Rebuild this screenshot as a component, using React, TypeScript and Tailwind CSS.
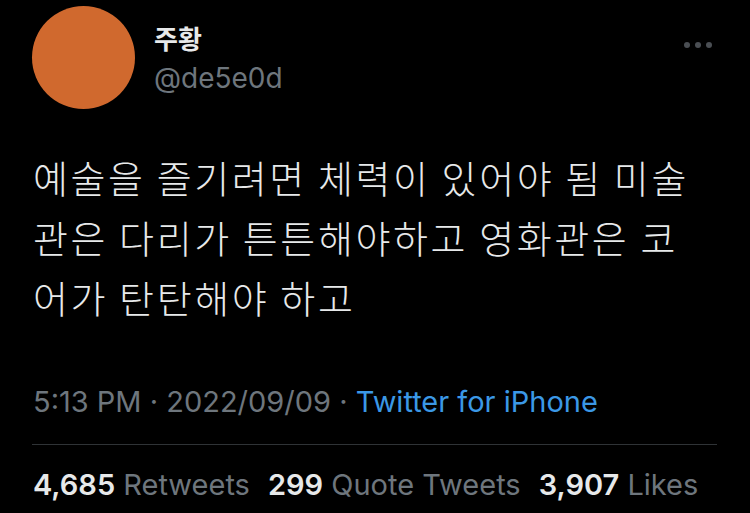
import React from "react"

const lines = [
  "예술을 즐기려면 체력이 있어야 됨 미술",
  "관은 다리가 튼튼해야하고 영화관은 코",
  "어가 탄탄해야 하고",
]

const stats = [
  { count: "4,685", label: "Retweets" },
  { count: "299", label: "Quote Tweets" },
  { count: "3,907", label: "Likes" },
]

const latin = "font-['Inter','Noto_Sans_CJK_KR',sans-serif]"

const App = () => {
  return (
    <div className={`w-[750px] h-[513px] bg-black overflow-hidden ${latin}`}>
      <div className="flex pl-[32px] pt-[6px] pr-[38px]">
        <div className="w-[103px] h-[103px] rounded-full bg-[#d0692e] shrink-0" />
        <div className="ml-[19px] flex flex-col pt-[17px]">
          <div className="text-[26px] leading-[34px] font-bold text-[#e7e9ea]">
            주황
          </div>
          <div className="text-[28px] leading-[34px] text-[#6e767d] mt-[4px]">
            @de5e0d
          </div>
        </div>
        <div className="ml-auto flex gap-[5px] pt-[36px]">
          <span className="w-[6px] h-[6px] rounded-full bg-[#4a4e53]" />
          <span className="w-[6px] h-[6px] rounded-full bg-[#4a4e53]" />
          <span className="w-[6px] h-[6px] rounded-full bg-[#4a4e53]" />
        </div>
      </div>

      <div className="px-[33px] mt-[38px] font-['Noto_Sans_CJK_KR',sans-serif] font-light text-[38px] tracking-[2.6px] leading-[60px] text-[#e7e9ea]">
        {lines.map((line, i) => (
          <div key={i} className="whitespace-nowrap">
            {line}
          </div>
        ))}
      </div>

      <div className="px-[33px] mt-[58px] text-[29px] leading-[34px] text-[#6e767d] whitespace-nowrap">
        5:13 PM · 2022/09/09 · <span className="text-[#3b98e6]">Twitter for iPhone</span>
      </div>

      <div className="ml-[32px] mt-[25px] mr-[33px] border-t border-[#2f3336]" />

      <div className="px-[33px] mt-[23px] text-[29px] leading-[34px] whitespace-nowrap flex gap-[18px]">
        {stats.map((s) => (
          <span key={s.label}>
            <span className="font-semibold text-[#e7e9ea]">{s.count}</span>{" "}
            <span className="text-[#6e767d]">{s.label}</span>
          </span>
        ))}
      </div>
    </div>
  )
}

export default App
